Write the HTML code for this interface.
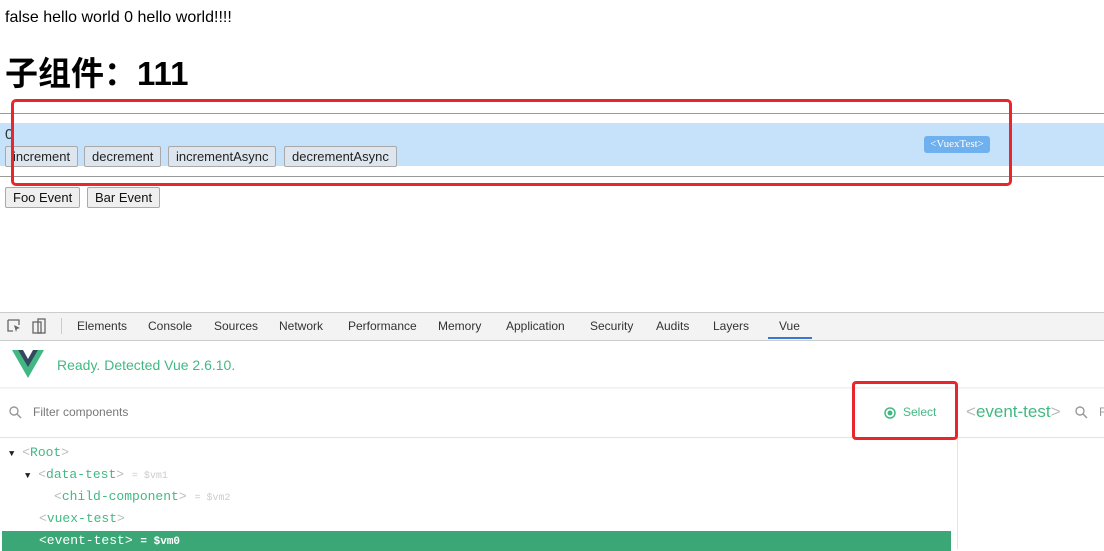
<!DOCTYPE html>
<html><head><meta charset="utf-8"><style>
*{margin:0;padding:0;box-sizing:border-box}
body{width:1104px;height:549px;overflow:hidden;background:#fff;font-family:"Liberation Sans","Noto Sans CJK SC",sans-serif;position:relative}
.a{position:absolute;white-space:nowrap}
.btn{position:absolute;top:146px;height:21px;border:1px solid #a9a9a9;background:#dde6ee;font-size:13px;line-height:19px;padding:0 7px;color:#222;border-radius:2px}
.btn2{position:absolute;top:187px;height:21px;border:1px solid #a9a9a9;background:#efefef;font-size:13px;line-height:19px;padding:0 7px;color:#111;border-radius:2px}
.tab{position:absolute;top:319px;font-size:12px;color:#333}
.mono{font-family:"Liberation Mono","DejaVu Sans Mono",monospace;font-size:13px}
.g{color:#42b983}.lg{color:#bbb}
</style></head><body>
<div class="a" style="left:5px;top:9px;font-size:16px;color:#000">false hello world 0 hello world!!!!</div>
<div class="a" style="left:5px;top:47px;font-size:33px;font-weight:bold;color:#000">子组件：111</div>
<div class="a" style="left:0;top:113px;width:1104px;height:1px;background:#999"></div>
<div class="a" style="left:0;top:123px;width:1104px;height:43px;background:#c6e2fa"></div>
<div class="a" style="left:5px;top:126px;font-size:15px;color:#333">0</div>
<div class="btn" style="left:5px">increment</div>
<div class="btn" style="left:84px">decrement</div>
<div class="btn" style="left:168px">incrementAsync</div>
<div class="btn" style="left:284px">decrementAsync</div>
<div class="a" style="left:924px;top:136px;width:66px;height:17px;background:#6fb0ee;border-radius:3px;color:#fff;font-family:'Liberation Serif',serif;font-size:11px;line-height:17px;text-align:center">&lt;VuexTest&gt;</div>
<div class="a" style="left:0;top:176px;width:1104px;height:1px;background:#999"></div>
<div class="btn2" style="left:5px">Foo Event</div>
<div class="btn2" style="left:87px">Bar Event</div>

<div class="a" style="left:0;top:312px;width:1104px;height:29px;background:#f3f3f3;border-top:1px solid #ccc;border-bottom:1px solid #ccc"></div>
<svg class="a" style="left:6px;top:318px" width="44" height="16"><path d="M2 2h11v5M2 2v11h5" fill="none" stroke="#666" stroke-width="1.3"/><path d="M8 7l6 3-3 1-1 3z" fill="#666"/><rect x="27" y="4" width="8" height="11" fill="none" stroke="#666" stroke-width="1.3"/><rect x="32" y="1" width="7" height="14" fill="none" stroke="#666" stroke-width="1.3"/></svg>
<div class="a" style="left:61px;top:318px;width:1px;height:16px;background:#ccc"></div>
<span class="tab" style="left:77px">Elements</span><span class="tab" style="left:148px">Console</span><span class="tab" style="left:214px">Sources</span><span class="tab" style="left:279px">Network</span><span class="tab" style="left:348px">Performance</span><span class="tab" style="left:438px">Memory</span><span class="tab" style="left:506px">Application</span><span class="tab" style="left:590px">Security</span><span class="tab" style="left:656px">Audits</span><span class="tab" style="left:713px">Layers</span><span class="tab" style="left:779px">Vue</span>
<div class="a" style="left:768px;top:337px;width:44px;height:2px;background:#3b77d0"></div>
<svg class="a" style="left:12px;top:350px" width="32" height="28"><path d="M0 0h8l8 14 8-14h8L16 28z" fill="#41b883"/><path d="M6 0h5l5 9 5-9h5L16 17z" fill="#35495e"/></svg>
<div class="a" style="left:57px;top:357px;font-size:14px;color:#42b983">Ready. Detected Vue 2.6.10.</div>
<div class="a" style="left:0;top:387px;width:1104px;height:3px;background:linear-gradient(#eee,#fff)"></div>
<svg class="a" style="left:9px;top:406px" width="13" height="13"><circle cx="5" cy="5" r="4" fill="none" stroke="#999" stroke-width="1.4"/><path d="M8 8l4 4" stroke="#999" stroke-width="1.5"/></svg>
<div class="a" style="left:33px;top:405px;font-size:12px;color:#777">Filter components</div>
<svg class="a" style="left:883px;top:406px" width="14" height="14"><circle cx="7" cy="7" r="5" fill="none" stroke="#42b983" stroke-width="1.5"/><circle cx="7" cy="7" r="2.5" fill="#42b983"/></svg>
<div class="a" style="left:903px;top:405px;font-size:12px;color:#42b983">Select</div>
<div class="a" style="left:966px;top:402px;font-size:17px;color:#42b983"><span class="lg">&lt;</span>event-test<span class="lg">&gt;</span></div>
<svg class="a" style="left:1075px;top:406px" width="13" height="13"><circle cx="5" cy="5" r="4" fill="none" stroke="#999" stroke-width="1.4"/><path d="M8 8l4 4" stroke="#999" stroke-width="1.5"/></svg>
<div class="a" style="left:1099px;top:405px;font-size:12px;color:#999">F</div>
<div class="a" style="left:0;top:437px;width:957px;height:1px;background:#e3e3e3"></div>
<div class="a" style="left:957px;top:389px;width:1px;height:160px;background:#e3e3e3"></div>
<div class="a" style="left:957px;top:437px;width:147px;height:1px;background:#e3e3e3"></div>

<div class="a mono" style="left:9px;top:445px"><span style="font-size:9px;color:#222">▼</span> <span class="lg">&lt;</span><span class="g">Root</span><span class="lg">&gt;</span></div>
<div class="a mono" style="left:25px;top:467px"><span style="font-size:9px;color:#222">▼</span> <span class="lg">&lt;</span><span class="g">data-test</span><span class="lg">&gt;</span> <span style="font-size:10px;color:#ccc">= $vm1</span></div>
<div class="a mono" style="left:54px;top:489px"><span class="lg">&lt;</span><span class="g">child-component</span><span class="lg">&gt;</span> <span style="font-size:10px;color:#ccc">= $vm2</span></div>
<div class="a mono" style="left:39px;top:511px"><span class="lg">&lt;</span><span class="g">vuex-test</span><span class="lg">&gt;</span></div>
<div class="a" style="left:2px;top:531px;width:949px;height:20px;background:#3ba776"></div>
<div class="a mono" style="left:39px;top:533px;color:#fff">&lt;event-test&gt; <span style="font-size:11px;font-weight:bold">= $vm0</span></div>

<div class="a" style="left:11px;top:99px;width:1001px;height:87px;border:3px solid #e8262b;border-radius:5px"></div>
<div class="a" style="left:852px;top:381px;width:106px;height:59px;border:3px solid #e8262b;border-radius:4px"></div>
</body></html>
